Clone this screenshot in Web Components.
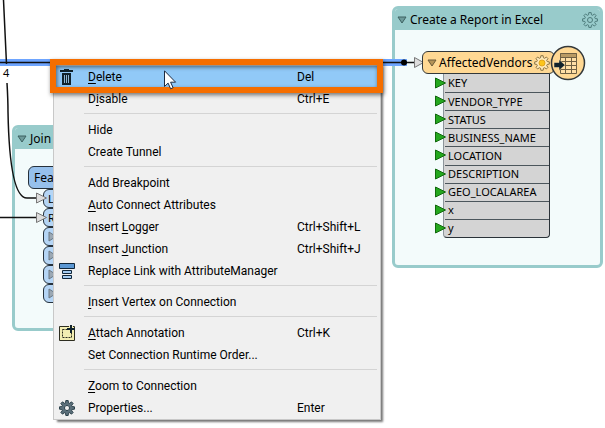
<!DOCTYPE html>
<html lang="en">
<head>
<meta charset="utf-8">
<title>Workspace canvas</title>
<style>
html,body{margin:0;height:100%}
body{background:#fff;overflow:hidden;color:#000;font-family:"Noto Sans","Open Sans",sans-serif;font-size:12px}
</style>
</head>
<body>
<workspace-canvas></workspace-canvas>
<script>
const define=(name,html)=>customElements.define(name,class extends HTMLElement{
  connectedCallback(){
    if(this.shadowRoot)return;
    const t=document.createElement('template');
    t.innerHTML=typeof html==='function'?html(this):html;
    this.attachShadow({mode:'open'}).append(t.content.cloneNode(true));
  }
});

const gearPath=(cx,cy,n,r1,r2)=>{
  let d='';
  for(let i=0;i<n;i++){
    const a=i*2*Math.PI/n;
    [[-.30,r1],[-.17,r2],[.17,r2],[.30,r1]].forEach(([o,r],k)=>{
      const t=a+o*2*Math.PI/n*1.15;
      d+=(i||k?'L':'M')+(cx+r*Math.sin(t)).toFixed(2)+' '+(cy-r*Math.cos(t)).toFixed(2);
    });
  }
  return d+'Z';
};

const icons={
  trash:'<svg width="16" height="16" viewBox="0 0 16 16"><path fill="#10222c" d="M1 1h4V0h5v1h4v2H1z M3 4h9v12H3z"/><path stroke="#8fb6d3" d="M5.500 6v8M7.500 6v8M9.500 6v8"/></svg>',
  manager:'<svg width="16" height="16" viewBox="0 0 16 16" stroke="#10263a"><path fill="#5b97d3" d="M.5.5h15v5H.500z"/><path fill="#a5cdf3" d="M3.500 7.500h9v3h-9zM3.500 12.500h9v3h-9z"/></svg>',
  note:'<svg width="16" height="16" viewBox="0 0 16 16"><path fill="#f2edb2" stroke="#2d2d20" d="M.5 1.500h15v14H.500z"/><path fill="none" stroke="#2d2d20" stroke-dasharray="2 1" d="M3.500 4.500h9v8h-9z"/><path stroke="#f2edb2" stroke-width="4" d="M12 1v7M8 4.500h7"/><path stroke="#10222c" stroke-width="2" d="M12 0v8M8 4h8"/></svg>',
  gear:`<svg width="16" height="16" viewBox="0 0 16 16"><path fill="#5c707b" stroke="#2c414b" fill-rule="evenodd" d="${gearPath(8,8,8,5.4,7.6)}M8 5.500a2.500 2.500 0 1 0 .01 0z"/></svg>`
};

define('menu-item',el=>{
  const key=el.getAttribute('key')||'';
  return `<style>
  :host{display:block}
  button{all:unset;box-sizing:border-box;display:grid;grid-template-columns:29px 1fr 81px;align-items:center;width:100%;height:22px;padding-left:3px;font-family:Roboto,"Noto Sans",sans-serif;font-size:12px;line-height:22px;white-space:nowrap}
  :host([active]) button{background:#91c9f7}
  .icon{display:flex}
  </style><button type="button" role="menuitem"><span class="icon">${icons[el.getAttribute('icon')]||''}</span><span><slot></slot></span><span>${key}</span></button>`;
});

define('menu-separator','<style>:host{display:block;height:9px;padding:3px 1px 0 28px;box-sizing:border-box}div{border-top:1px solid #d4d4d4}</style><div role="separator"></div>');

define('context-menu','<style>:host{display:block;box-sizing:border-box;background:#f0f0f0;border:1px solid #c8c8c8;padding:2px 2px 0;box-shadow:3px 3px 2px -1px #777}</style><div role="menu"><slot></slot></div>');

define('book-mark',el=>`<style>
  :host{display:flex;flex-direction:column;box-sizing:border-box;border:3px solid #98cbcb;border-radius:6px;background:#f3fbfb;overflow:hidden}
  header{display:flex;align-items:center;gap:3px;height:21px;flex:none;background:#98cbcb;padding:0 2px;white-space:nowrap}
  .title{flex:1;font-size:12px;line-height:20px}
  svg{display:block}
  </style><header><svg width="10" height="8" viewBox="0 0 10 8"><path fill="#6e9b9b" stroke="#3d6060" d="M1 1h8L5 7z"/></svg><span class="title">${el.getAttribute('label')}</span>${el.hasAttribute('gear')?`<svg width="16" height="16" viewBox="0 0 16 16" fill="none" stroke="#4e7c7c"><path d="${gearPath(8,8,8,5.4,7.500)}"/><circle cx="8" cy="8" r="2.500"/></svg>`:''}</header><slot></slot>`);

const attrs=['KEY','VENDOR_TYPE','STATUS','BUSINESS_NAME','LOCATION','DESCRIPTION','GEO_LOCALAREA','x','y'];
define('writer-node',`<style>
  :host{display:block}
  .head{display:flex;align-items:center;position:relative;box-sizing:border-box;height:23px;border:1px solid #33383a;border-radius:6px;background:#ffd893;padding:0 4px;gap:2px;width:133px}
  .head svg{display:block;flex:none}
  .name{flex:1;font-size:12px;line-height:20px;white-space:nowrap}
  .badge{position:absolute;right:-32px;top:-7px}
  ul{list-style:none;margin:0 0 0 21px;padding:0;box-sizing:border-box;width:107px;height:164px;display:grid;grid-auto-rows:1fr;background:#d4d4d4;border:1px solid #2a3238;border-top:0;border-left-color:#8d959b;border-radius:0 0 4px 4px}
  li{display:flex;align-items:center;gap:2px;margin-left:-9px;font-size:11px;line-height:16px}
  li span{flex:1;align-self:stretch;display:flex;align-items:center;padding-left:3px;margin-left:-3px}
  li+li span{border-top:1px solid #4c565c}
  li svg{flex:none}
  </style>
  <div class="head"><svg width="10" height="8" viewBox="0 0 10 8"><path fill="#b59358" stroke="#6c5a38" d="M1 1h8L5 7z"/></svg><span class="name">AffectedVendors</span>
  <svg width="16" height="16" viewBox="0 0 16 16"><path fill="#ffe9b8" stroke="#8b7444" d="${gearPath(8,8,8,5.4,7.4)}"/><circle cx="8" cy="8" r="3" fill="#fcc51b" stroke="#e3a61c"/></svg>
  <svg class="badge" width="36" height="36" viewBox="0 0 36 36"><circle cx="18" cy="18" r="16.500" fill="#ffd893" stroke="#33383a" stroke-width="1.500"/><path fill="#ffdfa6" d="M10.500 8.500h16v20h-16z"/><path fill="#b99a64" d="M10 8h17v4H10z"/><path fill="none" stroke="#6f6043" d="M10.500 8.500h16v20h-16zM10 12.500h17M10 16.500h17M10 20.500h17M10 24.500h17M15.500 12v17M21.500 12v17"/><path fill="#10222c" stroke="#ffe3ae" stroke-width=".5" d="M4 17.500h5v-3l6 5.500-6 5.500v-3H4z"/></svg></div>
  <ul>${attrs.map(a=>`<li><svg width="11" height="12" viewBox="0 0 11 12"><path fill="#24a81e" stroke="#12680f" d="M.5 1v10l10-5z"/></svg><span>${a}</span></li>`).join('')}</ul>`);

define('join-node',`<style>
  :host{display:block}
  div{box-sizing:border-box;border:1px solid #26313b;background:#b5d5f5}
  .name{height:23px;border-radius:6px;background:#96c0ec;padding-left:5px;font-size:12px;line-height:21px}
  .port{height:19px;margin-left:15px;border-radius:6px;padding-left:4px;font-size:11px;line-height:17px;display:flex;align-items:center}
  </style><div class="name">Fea</div><div class="port">L</div><div class="port">R</div>${'<div class="port"><svg width="9" height="11" viewBox="0 0 9 11"><path fill="#9ba8b4" stroke="#6c7984" d="M1 1v9l7-4.500z"/></svg></div>'.repeat(4)}`);

define('workspace-canvas',`<style>
  :host{display:block;position:relative;height:100%;overflow:hidden}
  .item{position:absolute}
  .joins{left:12px;top:125px;width:120px;height:206px}
  .report{left:392px;top:6px;width:211px;height:262px}
  .join{left:28px;top:166px;width:90px}
  .writer{left:422px;top:51px}
  .links{left:0;top:0;pointer-events:none}
  .count{left:3px;top:64px;font-size:11px;line-height:18px}
  .menu{left:53px;top:63px;width:328px}
  .frame{left:50px;top:59px;width:333px;height:34px;box-sizing:border-box;border:6px solid #f56e00;filter:drop-shadow(1px 2px 2px #0008);pointer-events:none}
  .cursor{left:164px;top:70px}
  u{text-underline-offset:2px}
  </style>
  <book-mark class="item joins" label="Join"></book-mark>
  <book-mark class="item report" label="Create a Report in Excel" gear></book-mark>
  <join-node class="item join"></join-node>
  <svg class="item links" width="430" height="230" viewBox="0 0 430 230"><path fill="none" stroke="#6ea5ff" stroke-width="7" d="M0 62.500h407"/><path fill="none" stroke="#111" stroke-width="1.500" d="M3.500 0Q5 35 6.500 64M7 83Q8 100 8 112C9 165 15 198 27 198h10M0 217.500h37M0 62.500h415"/><circle cx="404" cy="62.500" r="3"/><path fill="#ddd" stroke="#777" d="M36.500 193v10l10-5zM36.500 212.500v10l10-5zM414.500 57.500v10l9-5z"/></svg>
  <span class="item count">4</span>
  <writer-node class="item writer"></writer-node>
  <context-menu class="item menu">
    <menu-item icon="trash" key="Del" active><u>D</u>elete</menu-item>
    <menu-item key="Ctrl+E">D<u>i</u>sable</menu-item>
    <menu-separator></menu-separator>
    <menu-item>Hide</menu-item>
    <menu-item>Create Tunnel</menu-item>
    <menu-separator></menu-separator>
    <menu-item>Add Breakpoint</menu-item>
    <menu-item><u>A</u>uto Connect Attributes</menu-item>
    <menu-item key="Ctrl+Shift+L">Insert <u>L</u>ogger</menu-item>
    <menu-item key="Ctrl+Shift+J">Insert <u>J</u>unction</menu-item>
    <menu-item icon="manager">Replace Link with AttributeManager</menu-item>
    <menu-separator></menu-separator>
    <menu-item><u>I</u>nsert Vertex on Connection</menu-item>
    <menu-separator></menu-separator>
    <menu-item icon="note" key="Ctrl+K"><u>A</u>ttach Annotation</menu-item>
    <menu-item>Set Connection Runtime Order...</menu-item>
    <menu-separator></menu-separator>
    <menu-item><u>Z</u>oom to Connection</menu-item>
    <menu-item icon="gear" key="Enter">Properties...</menu-item>
  </context-menu>
  <div class="item frame"></div>
  <svg class="item cursor" width="13" height="20" viewBox="0 0 13 20"><path fill="#fff" stroke="#1c2a40" d="M.5.8v15.700l3.600-3.400 2.500 5.700 2.500-1.100-2.500-5.500h5z"/></svg>`);
</script>
</body>
</html>
